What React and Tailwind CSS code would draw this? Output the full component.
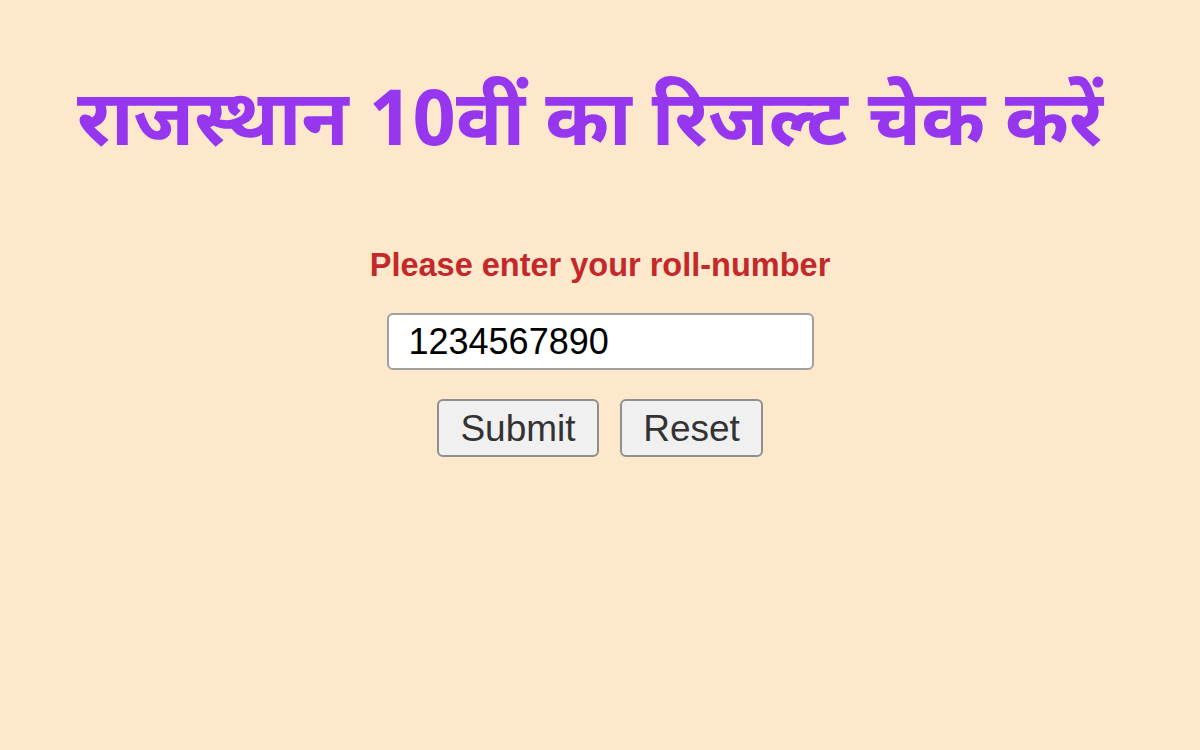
export default function App() {
  return (
    <div className="min-h-[750px] w-full bg-[#fde8cc] flex flex-col items-center" style={{ fontFamily: '"Liberation Sans", Arial, sans-serif' }}>
      <h1
        className="mt-[79px] text-[77px] leading-[94px] font-bold text-[#9636ee] pr-[20px]"
        style={{ fontFamily: '"Noto Sans Devanagari", "Noto Sans", sans-serif' }}
      >
        राजस्थान 10वीं का रिजल्ट चेक करें
      </h1>

      <p className="mt-[73px] text-[32.5px] leading-[38px] font-bold text-[#c4282a]">
        Please enter your roll-number
      </p>

      <input
        type="text"
        defaultValue="1234567890"
        className="mt-[29px] w-[427px] h-[57px] bg-white border-2 border-[#a0a0a0] rounded-[6px] px-[20px] text-[36px] text-black outline-none"
      />

      <div className="mt-[29px] flex gap-[21px]">
        <button className="w-[162px] h-[58px] bg-[#f0f0f0] border-2 border-[#8f8f8f] rounded-[6px] text-[37px] text-[#333]">
          Submit
        </button>
        <button className="w-[143px] h-[58px] bg-[#f0f0f0] border-2 border-[#8f8f8f] rounded-[6px] text-[37px] text-[#333]">
          Reset
        </button>
      </div>
    </div>
  );
}
